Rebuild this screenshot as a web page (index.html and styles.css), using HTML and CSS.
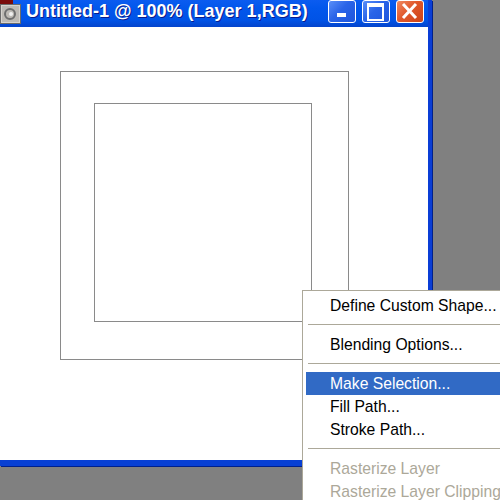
FILE: index.html
```html
<!doctype html>
<html lang="en">
	<head>
	<meta charset="utf-8">
	<title>Untitled-1 @ 100% (Layer 1,RGB)</title>
	<link rel="stylesheet" href="styles.css">
	</head>
	<body>

		<div class="window">
			<div class="titlebar">
				<svg class="doc-icon" width="22" height="25" viewBox="0 0 22 25">
					<rect x="0" y="0" width="13" height="4" fill="#7a0c0c"/>
					<rect x="0.5" y="4.5" width="20" height="19" fill="#d6d3ce" stroke="#6b6b6b"/>
					<rect x="2" y="6" width="17" height="16" fill="#bdbab5"/>
					<circle cx="10" cy="14" r="5" fill="none" stroke="#6e6e6e" stroke-width="2"/>
					<circle cx="11" cy="14" r="2" fill="#f0f0f0"/>
				</svg>
				<span class="title">Untitled-1 @ 100% (Layer 1,RGB)</span>
				<div class="controls">
					<span class="btn btn-min"><i></i></span>
					<span class="btn btn-max"><i></i></span>
					<span class="btn btn-close">
						<svg width="26" height="21" viewBox="0 0 26 21">
							<path d="M6 3 L19 17 M19 3 L6 17" stroke="#fff" stroke-width="3"/>
						</svg>
					</span>
				</div>
			</div>
			<div class="canvas">
				<div class="shape-outer">
					<div class="shape-inner"></div>
				</div>
			</div>
		</div>

		<ul class="menu">
			<li class="menu-item">Define Custom Shape...</li>
			<li class="menu-sep"></li>
			<li class="menu-item">Blending Options...</li>
			<li class="menu-sep"></li>
			<li class="menu-item active">Make Selection...</li>
			<li class="menu-item">Fill Path...</li>
			<li class="menu-item">Stroke Path...</li>
			<li class="menu-sep"></li>
			<li class="menu-item disabled">Rasterize Layer</li>
			<li class="menu-item disabled">Rasterize Layer Clipping</li>
		</ul>

	</body>
</html>
```

FILE: styles.css
```css
body {
	margin: 0;
	width: 500px;
	height: 500px;
	overflow: hidden;
	position: relative;
	background-color: #808080;
	font-family: "Liberation Sans", Arial, sans-serif;
}

.window {
	width: 428px;
	border-right: 4px solid #0a3ed6;
	border-bottom: 6px solid #0840d4;
	box-shadow: 1px 1px 0 #00208c;
}

.titlebar {
	display: flex;
	align-items: flex-start;
	height: 27px;
	background: linear-gradient(#0b5cf0, #0257ec 30%, #0053e6 75%, #0444cc);
}

.doc-icon {
	flex: none;
	display: block;
}

.title {
	margin-left: 4px;
	margin-top: 2px;
	color: #fff;
	font-weight: bold;
	font-size: 18px;
	line-height: 18px;
	white-space: nowrap;
	text-shadow: 1px 1px 0 #0a1c8c;
}

.controls {
	display: flex;
	gap: 6px;
	margin-left: auto;
	margin-right: 4px;
}

.btn {
	display: block;
	position: relative;
	width: 26px;
	height: 21px;
	border: 1px solid #fff;
	border-radius: 3px;
	background: linear-gradient(135deg, #5b8ff8, #2a64e8 45%, #1f56dc);
}

.btn-min i {
	position: absolute;
	left: 8px;
	top: 12px;
	width: 9px;
	height: 4px;
	background: #fff;
}

.btn-max i {
	position: absolute;
	left: 4px;
	top: 2px;
	width: 13px;
	height: 12px;
	border: 2px solid #fff;
	border-top-width: 4px;
}

.btn-close {
	background: linear-gradient(135deg, #f08a62, #e0582c 45%, #cc4418);
}

.btn-close svg {
	display: block;
}

.canvas {
	height: 433px;
	background-color: #fff;
	padding-top: 44px;
	padding-left: 60px;
	box-sizing: border-box;
}

.shape-outer {
	width: 289px;
	height: 289px;
	border: 1px solid #8a8a8a;
	padding: 31px 0 0 33px;
	box-sizing: border-box;
}

.shape-inner {
	width: 218px;
	height: 219px;
	border: 1px solid #8a8a8a;
	box-sizing: border-box;
}

.menu {
	position: absolute;
	left: 302px;
	top: 290px;
	width: 230px;
	margin: 0;
	padding: 3px;
	list-style: none;
	background-color: #fff;
	border: 1px solid #aca899;
	font-size: 15.7px;
}

.menu-item {
	height: 23px;
	line-height: 23px;
	padding-left: 24px;
	color: #000;
	white-space: nowrap;
}

.menu-item.active {
	background-color: #316ac5;
	color: #fff;
}

.menu-item.disabled {
	color: #aca899;
}

.menu-sep {
	height: 1px;
	margin: 7px 0 8px 2px;
	background-color: #aca899;
}
```
